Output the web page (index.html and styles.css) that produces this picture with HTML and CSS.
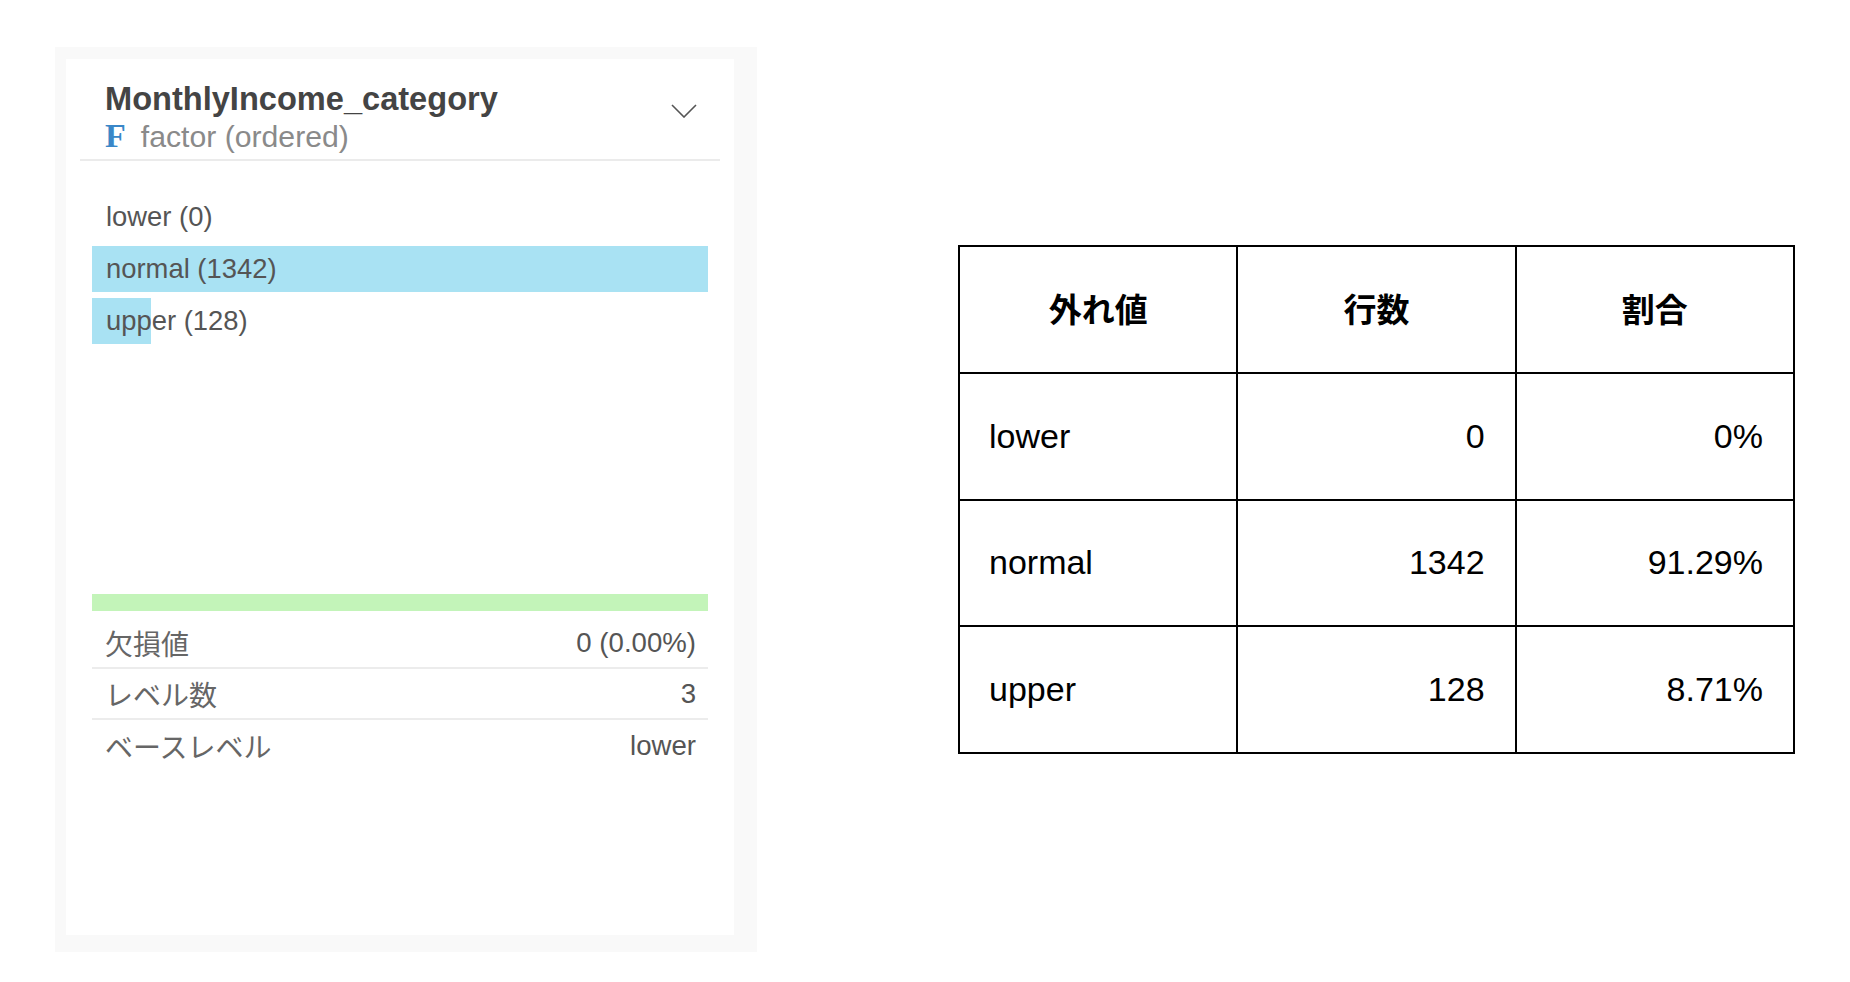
FILE: index.html
```html
<!DOCTYPE html>
<html lang="ja">
<head>
<meta charset="utf-8">
<title>MonthlyIncome_category</title>
<link rel="stylesheet" href="styles.css">
</head>
<body>
<div class="page">
  <div class="panel">
    <div class="card">
      <div class="header">
        <div class="header-text">
          <div class="title">MonthlyIncome_category</div>
          <div class="subtitle"><span class="type-f">F</span><span>factor (ordered)</span></div>
        </div>
        <svg class="chevron" width="26" height="14" viewBox="0 0 26 14"><polyline points="1,1 13,13 25,1" fill="none" stroke="#555" stroke-width="1.6"/></svg>
      </div>
      <div class="levels">
        <div class="level"><div class="bar" style="width:0%"></div><span class="level-text">lower (0)</span></div>
        <div class="level"><div class="bar" style="width:100%"></div><span class="level-text">normal (1342)</span></div>
        <div class="level"><div class="bar" style="width:9.54%"></div><span class="level-text">upper (128)</span></div>
      </div>
      <div class="complete-bar"></div>
      <div class="stats">
        <div class="stat"><span class="stat-label">欠損値</span><span class="stat-value">0 (0.00%)</span></div>
        <div class="stat"><span class="stat-label">レベル数</span><span class="stat-value">3</span></div>
        <div class="stat"><span class="stat-label">ベースレベル</span><span class="stat-value">lower</span></div>
      </div>
    </div>
  </div>
  <table class="summary">
    <thead>
      <tr><th>外れ値</th><th>行数</th><th>割合</th></tr>
    </thead>
    <tbody>
      <tr><td class="name">lower</td><td class="num">0</td><td class="num">0%</td></tr>
      <tr><td class="name">normal</td><td class="num">1342</td><td class="num">91.29%</td></tr>
      <tr><td class="name">upper</td><td class="num">128</td><td class="num">8.71%</td></tr>
    </tbody>
  </table>
</div>
</body>
</html>
```
FILE: styles.css
```css
* { box-sizing: border-box; }
html, body { margin: 0; padding: 0; background: #fff; }
body {
  font-family: "Liberation Sans", "Noto Sans CJK JP", sans-serif;
  color: #555;
}
.page {
  display: flex;
  align-items: flex-start;
  padding: 47px 0 0 55px;
  gap: 201px;
}
.panel {
  width: 702px;
  height: 905px;
  background: #f9f9f9;
  padding: 12px 23px 17px 11px;
  flex-shrink: 0;
}
.card {
  background: #fff;
  height: 100%;
  padding: 0 14px;
}
.header {
  display: flex;
  justify-content: space-between;
  align-items: flex-start;
  padding: 21px 23px 4px 25px;
  border-bottom: 2px solid #ebebeb;
}
.title {
  font-size: 32.6px;
  line-height: 38px;
  font-weight: 700;
  color: #444;
}
.subtitle {
  display: flex;
  align-items: baseline;
  font-size: 30.2px;
  line-height: 36px;
  color: #8a8a8a;
}
.type-f {
  font-family: "Liberation Serif", serif;
  font-weight: 700;
  font-size: 34px;
  color: #3a87c8;
  margin-right: 15px;
}
.chevron { margin-top: 24px; flex-shrink: 0; }
.levels {
  margin: 33px 12px 0;
  height: 400px;
  display: flex;
  flex-direction: column;
  gap: 6px;
}
.level {
  position: relative;
  height: 46px;
  display: flex;
  align-items: center;
  padding-left: 14px;
  font-size: 27.4px;
  color: #555;
}
.bar {
  position: absolute;
  left: 0; top: 0; bottom: 0;
  background: #a9e2f3;
}
.level-text { position: relative; }
.complete-bar {
  margin: 0 12px;
  height: 17px;
  background: #c3f4b9;
}
.stats { margin: 7px 12px 0; }
.stat {
  height: 51px;
  display: flex;
  justify-content: space-between;
  align-items: center;
  padding: 0 12px 0 13px;
  font-size: 27.6px;
  border-bottom: 2px solid #ececec;
}
.stat:last-child { border-bottom: none; }
.stat-label {
  color: #666;
  font-family: "Noto Sans CJK JP", "Liberation Sans", sans-serif;
  font-size: 28px;
}
.stat-value { color: #555; }
.summary {
  margin-top: 198px;
  border-collapse: collapse;
  width: 837px;
  flex-shrink: 0;
}
.summary th, .summary td {
  border: 2px solid #000;
  height: 126.75px;
  width: 279px;
  color: #000;
}
.summary th {
  font-family: "Noto Sans CJK JP", sans-serif;
  font-weight: 700;
  font-size: 33px;
  text-align: center;
  padding-bottom: 4px;
}
.summary td {
  font-size: 34px;
  padding: 0 30px 0 29px;
}
.summary td.name { text-align: left; }
.summary td.num { text-align: right; }
```
